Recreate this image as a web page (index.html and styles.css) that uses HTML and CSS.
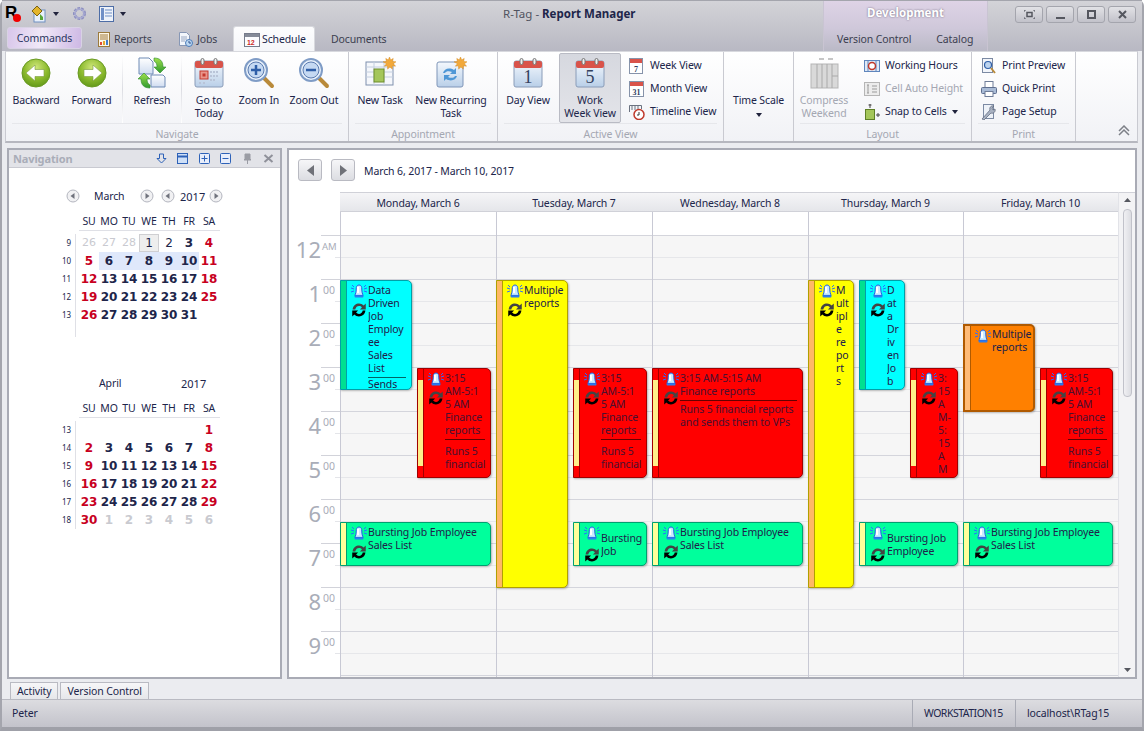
FILE: index.html
```html
<!DOCTYPE html>
<html lang="en">
<head>
<meta charset="utf-8">
<title>R-Tag - Report Manager</title>
<link rel="stylesheet" href="styles.css">
</head>
<body>
<svg class="defs" aria-hidden="true">
  <defs>
    <radialGradient id="gGreen" cx="50%" cy="30%" r="75%"><stop offset="0" stop-color="#cfe67a"/><stop offset=".55" stop-color="#8dbb2e"/><stop offset="1" stop-color="#5c9416"/></radialGradient>
    <linearGradient id="gBlue" x1="0" y1="0" x2="0" y2="1"><stop offset="0" stop-color="#f4f8fd"/><stop offset="1" stop-color="#b9cfe8"/></linearGradient>
    <linearGradient id="gPage" x1="0" y1="0" x2="0" y2="1"><stop offset="0" stop-color="#fff"/><stop offset="1" stop-color="#cfdcf0"/></linearGradient>
    <linearGradient id="gArrow" x1="0" y1="0" x2="0" y2="1"><stop offset="0" stop-color="#9fe04a"/><stop offset="1" stop-color="#2f9a2f"/></linearGradient>
    <symbol id="bell" viewBox="0 0 16 14">
      <path d="M0 4l3 1M1 1l2 2M0 8l3-1M16 4l-3 1M15 1l-2 2M16 8l-3-1" stroke="#2b6cff" stroke-width="1" fill="none"/>
      <path d="M8 1C5.800 1 5.200 3 5.200 5c0 3-.6 5-1.400 6.400h8.400C11.400 10 10.800 8 10.800 5 10.800 3 10.200 1 8 1z" fill="#c9ebff" stroke="#1c5fe0"/>
      <rect x="3.500" y="11.500" width="9" height="2" rx="1" fill="#2a7bf0"/>
      <path d="M7 3v6" stroke="#fff" stroke-width="2"/>
    </symbol>
    <symbol id="recur" viewBox="1 1 12 12">
      <path d="M1.500 6.500C2 3 4.500 1.500 7 1.500c1.600 0 3 .6 4 1.700L12.800 1.500V6.500H7.800l1.700-1.700C8.900 4 8 3.600 7 3.600c-1.500 0-2.800 1-3.200 2.900z" fill="#444"/>
      <path d="M12.500 7.500C12 11 9.500 12.500 7 12.500c-1.600 0-3-.6-4-1.700L1.200 12.500V7.500h5L4.500 9.200c.6.800 1.500 1.200 2.500 1.200 1.500 0 2.800-1 3.200-2.900z" fill="#000"/>
    </symbol>
    <symbol id="cal" viewBox="0 0 32 32">
      <rect x="2" y="4" width="28" height="26" rx="2" fill="url(#gBlue)" stroke="#8a9cb8"/>
      <rect x="2" y="4" width="28" height="7" rx="2" fill="#d9534a"/>
      <rect x="8" y="1.500" width="3" height="6" rx="1.500" fill="#eee" stroke="#777"/>
      <rect x="21" y="1.500" width="3" height="6" rx="1.500" fill="#eee" stroke="#777"/>
    </symbol>
    <symbol id="lens" viewBox="0 0 32 32">
      <path d="M20 20l9 9" stroke="#b98a3a" stroke-width="4" stroke-linecap="round"/>
      <circle cx="13" cy="13" r="11" fill="#e8f1fb" stroke="#7f9cc6" stroke-width="2"/>
      <circle cx="13" cy="13" r="8" fill="#c5d9f2" stroke="#5c7cb0"/>
    </symbol>
    <symbol id="star" viewBox="0 0 14 14">
      <path d="M7 0l1.300 3.200L11 1.500l-.6 3.300 3.600.4-2.800 2 2.300 2.700-3.400-.4L10 13 7.500 10.800 5 13l-.2-3.500-3.400.4 2.300-2.700L0 5.200l3.600-.4L3 1.500l2.700 1.700z" fill="#f2a93b" stroke="#d38a1e" stroke-width=".5"/>
    </symbol>
    <symbol id="circleL" viewBox="0 0 14 14"><circle cx="7" cy="7" r="6" fill="#f1f1f3" stroke="#b4b6bf"/><path d="M8.500 4v6L4.500 7z" fill="#70737d"/></symbol>
    <symbol id="circleR" viewBox="0 0 14 14"><circle cx="7" cy="7" r="6" fill="#f1f1f3" stroke="#b4b6bf"/><path d="M5.500 4v6L9.500 7z" fill="#70737d"/></symbol>
  </defs>
</svg>

<div class="app">
  <header class="chrome">
    <div class="chrome-left">
      <div class="titlebar">
        <div class="qat">
          <span class="logo">R<i class="logo-dot"></i></span>
          <svg class="q1" width="16" height="18" viewBox="0 0 16 18"><rect x="3" y="5" width="11" height="12" fill="#e8f0fb" stroke="#6f8fc0"/><path d="M1 6l5-5 5 5-5 5z" fill="#e3b52c" stroke="#7a6213"/><path d="M9 9l3 3v3H9z" fill="#58a838"/></svg>
          <span class="caret q-caret"></span>
          <svg class="q2" width="15" height="15" viewBox="0 0 15 15"><circle cx="7.500" cy="7.500" r="5" fill="none" stroke="#8d8fc0" stroke-width="3" stroke-dasharray="2.500 1"/><circle cx="7.500" cy="7.500" r="4.500" fill="none" stroke="#a9abd2" stroke-width="1.500"/></svg>
          <svg class="q3" width="15" height="16" viewBox="0 0 15 16"><rect x=".5" y=".5" width="14" height="15" fill="#eef2f9" stroke="#4d6da6"/><rect x="2" y="2" width="3" height="12" fill="#6f8fc6"/><path d="M6 4h7M6 7h7M6 10h7" stroke="#6f8fc6"/></svg>
          <span class="caret q-caret"></span>
        </div>
        <div class="title">R-Tag - <b>Report Manager</b></div>
      </div>
      <nav class="tabs">
        <span class="tab-commands">Commands</span>
        <span class="tab t-reports"><svg width="12" height="15" viewBox="0 0 12 15"><rect x=".5" y=".5" width="11" height="14" fill="#fdf6e6" stroke="#9b7a3d"/><path d="M2 3h8M2 5h8M2 7h8" stroke="#a07b3d"/><rect x="2" y="10" width="2" height="3" fill="#e04a3a"/><rect x="5" y="9" width="2" height="4" fill="#e0a72f"/><rect x="8" y="8" width="2" height="5" fill="#3f7fd0"/></svg>Reports</span>
        <span class="tab t-jobs"><svg width="14" height="15" viewBox="0 0 14 15"><path d="M.5.500h7l3 3v10h-10z" fill="#f3f6fb" stroke="#8797b5"/><path d="M2 5h6M2 7h6M2 9h4" stroke="#9aa8c2"/><circle cx="10" cy="11" r="3.500" fill="#bcd7f2" stroke="#4c7cb8"/><path d="M10 9v2h2" stroke="#33558f" fill="none"/></svg>Jobs</span>
        <span class="tab tab-on"><svg width="16" height="15" viewBox="0 0 16 15"><rect x=".5" y="1.500" width="15" height="13" fill="#fbfcff" stroke="#767c8c"/><rect x="1" y="2" width="14" height="3" fill="#858b99"/><text x="3" y="12.500" class="cal-num">12</text></svg>Schedule</span>
        <span class="tab t-docs">Documents</span>
      </nav>
    </div>
    <div class="context">
      <div class="context-name">Development</div>
      <div class="context-tabs"><span>Version Control</span><span>Catalog</span></div>
    </div>
    <div class="winbtns">
      <span class="winbtn"><svg width="11" height="9" viewBox="0 0 11 9"><path d="M0 2V0h2M9 0h2v2M11 7v2H9M2 9H0V7" fill="none" stroke="#55575f"/><rect x="3" y="2.500" width="5" height="4" fill="none" stroke="#55575f" stroke-width="1.500"/></svg></span>
      <span class="winbtn"><svg width="9" height="9" viewBox="0 0 9 9"><rect x="0" y="7" width="9" height="2" fill="#55575f"/></svg></span>
      <span class="winbtn"><svg width="9" height="9" viewBox="0 0 9 9"><rect x="1" y="1" width="7" height="7" fill="none" stroke="#55575f" stroke-width="2"/></svg></span>
      <span class="winbtn"><svg width="9" height="9" viewBox="0 0 9 9"><path d="M1 1l7 7M8 1L1 8" stroke="#55575f" stroke-width="2"/></svg></span>
    </div>
  </header>

  <section class="ribbon">
    <div class="group g-nav">
      <div class="gbody">
        <div class="rbtn w56"><svg class="ic32" viewBox="0 0 32 32"><circle cx="16" cy="16" r="14" fill="url(#gGreen)" stroke="#6a9a24"/><path d="M6 16l9-8v4.500h9v7h-9V24z" fill="#fff" stroke="#7a9c40" stroke-width=".6"/></svg><span>Backward</span></div>
        <div class="rbtn w55"><svg class="ic32" viewBox="0 0 32 32"><circle cx="16" cy="16" r="14" fill="url(#gGreen)" stroke="#6a9a24"/><path d="M26 16l-9-8v4.500H8v7h9V24z" fill="#fff" stroke="#7a9c40" stroke-width=".6"/></svg><span>Forward</span></div>
        <i class="vsep sep-a"></i>
        <div class="rbtn w58"><svg class="ic32" viewBox="0 0 32 32"><path d="M3 1h10l4 4v12H3z" fill="url(#gPage)" stroke="#6f8bb5"/><path d="M15 18h12l2 2v10H15z" fill="url(#gPage)" stroke="#6f8bb5"/><path d="M18 1c6 0 9 3 9 9h3l-6 6-6-6h3c0-3-1-5-3-6z" fill="url(#gArrow)" stroke="#2c8a2c" stroke-width=".6"/><path d="M14 31c-6 0-9-3-9-9H2l6-6 6 6h-3c0 3 1 5 3 6z" fill="url(#gArrow)" stroke="#2c8a2c" stroke-width=".6"/></svg><span>Refresh</span></div>
        <i class="vsep"></i>
        <div class="rbtn w54"><svg class="ic32" viewBox="0 0 32 32"><use href="#cal"/><g fill="#b9c4d8"><rect x="17" y="14" width="2" height="2"/><rect x="20" y="14" width="2" height="2"/><rect x="23" y="14" width="2" height="2"/><rect x="17" y="18" width="2" height="2"/><rect x="20" y="18" width="2" height="2"/><rect x="23" y="18" width="2" height="2"/><rect x="17" y="22" width="2" height="2"/><rect x="20" y="22" width="2" height="2"/><rect x="6" y="25" width="2" height="2"/><rect x="10" y="25" width="2" height="2"/></g><rect x="7" y="14" width="8" height="8" fill="#e9958b" stroke="#c4392f"/><rect x="9.500" y="16.500" width="3" height="3" fill="#c4392f"/></svg><span>Go to<br>Today</span></div>
        <div class="rbtn w46"><svg class="ic32" viewBox="0 0 32 32"><use href="#lens"/><path d="M8 13h10M13 8v10" stroke="#2f5fa8" stroke-width="2.500"/></svg><span>Zoom In</span></div>
        <div class="rbtn w64"><svg class="ic32" viewBox="0 0 32 32"><use href="#lens"/><path d="M8 13h10" stroke="#2f5fa8" stroke-width="2.500"/></svg><span>Zoom Out</span></div>
      </div>
      <div class="glabel">Navigate</div>
    </div>
    <div class="group g-app">
      <div class="gbody">
        <div class="rbtn w62"><svg class="ic32" viewBox="0 0 32 32"><rect x="2" y="5" width="27" height="23" fill="#f5f7fb" stroke="#7f90ad"/><path d="M2 10h27M2 15h27M2 20h27M10 5v23M20 5v23" stroke="#c3cedf"/><rect x="10" y="12" width="10" height="13" fill="#a4c65a" stroke="#6c8d2a"/><use href="#star" x="19" y="0" width="13" height="13"/></svg><span>New Task</span></div>
        <div class="rbtn w80"><svg class="ic32" viewBox="0 0 32 32"><rect x="2" y="5" width="26" height="25" rx="2" fill="url(#gBlue)" stroke="#7f95b8"/><path d="M8 16c1-4 6-6 11-3l2-2v6h-6l2-2c-3-1.500-6-1-7 1zM22 19c-1 4-6 6-11 3l-2 2v-6h6l-2 2c3 1.500 6 1 7-1z" fill="#4f97d6"/><use href="#star" x="19" y="0" width="13" height="13"/></svg><span>New Recurring<br>Task</span></div>
      </div>
      <div class="glabel">Appointment</div>
    </div>
    <div class="group g-view">
      <div class="gbody">
        <div class="rbtn w60"><svg class="ic32" viewBox="0 0 32 32"><use href="#cal"/><text x="16" y="26" class="cal-big">1</text></svg><span>Day View</span></div>
        <div class="rbtn w62 rbtn-on"><svg class="ic32" viewBox="0 0 32 32"><use href="#cal"/><text x="16" y="26" class="cal-big">5</text></svg><span>Work<br>Week View</span></div>
        <div class="rcol col-view">
          <div class="rsm"><svg width="16" height="16" viewBox="0 0 16 16"><rect x=".5" y=".5" width="13" height="15" fill="#fff" stroke="#8693aa"/><rect x="1" y="1" width="12" height="4" fill="#d9534a"/><text x="7" y="14" class="cal-sm">7</text></svg><span>Week View</span></div>
          <div class="rsm"><svg width="16" height="16" viewBox="0 0 16 16"><rect x=".5" y=".5" width="14" height="15" fill="#fff" stroke="#8693aa"/><rect x="1" y="1" width="13" height="4" fill="#d9534a"/><text x="7.500" y="14" class="cal-sm">31</text></svg><span>Month View</span></div>
          <div class="rsm"><svg width="16" height="16" viewBox="0 0 16 16"><path d="M.5 8V1.500h12V5M3 2v4M6 2v4M9 2v4" fill="none" stroke="#6b7280"/><circle cx="10" cy="10.500" r="5" fill="#fff" stroke="#c0392b" stroke-width="1.500"/><path d="M10 8v3H8" stroke="#333" fill="none"/></svg><span>Timeline View</span></div>
        </div>
      </div>
      <div class="glabel">Active View</div>
    </div>
    <div class="group g-scale">
      <div class="gbody gbody-center">
        <div class="rbtn-text"><span>Time Scale</span><span class="caret"></span></div>
      </div>
      <div class="glabel glabel-empty"></div>
    </div>
    <div class="group g-layout">
      <div class="gbody">
        <div class="rbtn w60 dim"><svg class="ic32" viewBox="0 0 32 32"><rect x="3" y="7" width="27" height="24" fill="#d9d9d9" stroke="#b5b5b5"/><path d="M9 7v24M14 7v24M19 7v24M24 7v24M24 19h6" stroke="#a9a9a9"/><path d="M11 2h5M25 2h-5" stroke="#8d8d8d"/></svg><span>Compress<br>Weekend</span></div>
        <div class="rcol col-layout">
          <div class="rsm"><svg width="16" height="16" viewBox="0 0 16 16"><rect x=".5" y="2.500" width="15" height="11" fill="#dfe9f6" stroke="#5f86bd"/><path d="M4 3v10M12 3v10" stroke="#5f86bd"/><circle cx="8" cy="8" r="3.500" fill="#fff" stroke="#c0392b" stroke-width="1.500"/></svg><span>Working Hours</span></div>
          <div class="rsm dim"><svg width="16" height="16" viewBox="0 0 16 16"><rect x=".5" y="1.500" width="15" height="13" fill="#ececec" stroke="#b5b5b5"/><path d="M4 4v8M3 4h2M3 12h2M8 5h5M8 8h5M8 11h5" stroke="#9a9a9a"/></svg><span>Cell Auto Height</span></div>
          <div class="rsm"><svg width="16" height="16" viewBox="0 0 16 16"><rect x="1.500" y="5.500" width="9" height="10" fill="#a4c65a" stroke="#5f7f27"/><path d="M6 0v4M4.500 1h3M12 11h4M14 9v4" stroke="#444"/></svg><span>Snap to Cells</span><span class="caret"></span></div>
        </div>
      </div>
      <div class="glabel">Layout</div>
    </div>
    <div class="group g-print">
      <div class="gbody">
        <div class="rcol col-print">
          <div class="rsm"><svg width="16" height="16" viewBox="0 0 16 16"><rect x="1.500" y=".5" width="10" height="14" fill="#f2f5fa" stroke="#7c8aa3"/><circle cx="7" cy="7" r="3.500" fill="#bcd3ee" stroke="#2f5fa8" stroke-width="1.200"/><path d="M10 10l4 5" stroke="#b98a3a" stroke-width="2"/></svg><span>Print Preview</span></div>
          <div class="rsm"><svg width="16" height="16" viewBox="0 0 16 16"><rect x="4" y=".5" width="8" height="6" fill="#fff" stroke="#6f7d98"/><rect x=".5" y="6.500" width="15" height="6" rx="1" fill="#a9bbd6" stroke="#5f6f8f"/><rect x="4" y="10.500" width="8" height="5" fill="#fff" stroke="#6f7d98"/></svg><span>Quick Print</span></div>
          <div class="rsm"><svg width="16" height="16" viewBox="0 0 16 16"><rect x="2.500" y=".5" width="10" height="14" fill="#eef2f8" stroke="#7c8aa3"/><path d="M1 15l8-9c-1-2 1-5 4-4l-2 2 1 2 2-1c1 3-2 5-4 4l-7 7z" fill="#a9b2c2" stroke="#596377" stroke-width=".7"/></svg><span>Page Setup</span></div>
        </div>
      </div>
      <div class="glabel">Print</div>
    </div>
    <div class="group-end"><svg width="12" height="11" viewBox="0 0 12 11"><path d="M1 6l5-5 5 5M1 10l5-5 5 5" fill="none" stroke="#7d8088" stroke-width="1.500"/></svg></div>
  </section>

  <main class="workspace">
    <aside class="nav-panel">
      <div class="nav-head">
        <span class="nav-title">Navigation</span>
        <div class="nav-tools">
          <svg width="11" height="11" viewBox="0 0 11 11"><path d="M3.500 1h4v4.500H10L5.500 10 1 5.500h2.500z" fill="none" stroke="#2e62b8"/></svg>
          <svg width="11" height="11" viewBox="0 0 11 11"><rect x=".5" y=".5" width="10" height="10" fill="#cfe0f7" stroke="#2e62b8"/><path d="M1 3.500h9" stroke="#2e62b8" stroke-width="2"/></svg>
          <svg width="11" height="11" viewBox="0 0 11 11"><rect x=".5" y=".5" width="10" height="10" rx="1" fill="#e8eefb" stroke="#2e62b8"/><path d="M2.500 5.500h6M5.500 2.500v6" stroke="#2e62b8"/></svg>
          <svg width="11" height="11" viewBox="0 0 11 11"><rect x=".5" y=".5" width="10" height="10" rx="1" fill="#e8eefb" stroke="#2e62b8"/><path d="M2.500 5.500h6" stroke="#2e62b8"/></svg>
          <svg width="11" height="11" viewBox="0 0 11 11"><path d="M3 1h5v5l1 1H2l1-1zM5.500 7v4" fill="#9a9ca4" stroke="#9a9ca4"/></svg>
          <svg width="11" height="11" viewBox="0 0 11 11"><path d="M1.500 2l8 7M9.500 2l-8 7" stroke="#8f919a" stroke-width="2"/></svg>
        </div>
      </div>
      <div class="month month-1">
        <div class="mhead">
          <svg class="arrow a1" width="14" height="14"><use href="#circleL"/></svg>
          <span class="mname">March</span>
          <svg class="arrow a2" width="14" height="14"><use href="#circleR"/></svg>
          <svg class="arrow a3" width="14" height="14"><use href="#circleL"/></svg>
          <span class="myear">2017</span>
          <svg class="arrow a4" width="14" height="14"><use href="#circleR"/></svg>
        </div>
        <div class="wdays"><span>SU</span><span>MO</span><span>TU</span><span>WE</span><span>TH</span><span>FR</span><span>SA</span></div>
        <div class="mbody">
          <div class="wnums"><span>9</span><span>10</span><span>11</span><span>12</span><span>13</span></div>
          <div class="days-grid">
            <span class="out">26</span><span class="out">27</span><span class="out">28</span><span class="plain today">1</span><span class="plain">2</span><span class="b">3</span><span class="r">4</span>
            <span class="r">5</span><span class="b sel">6</span><span class="b sel">7</span><span class="b sel">8</span><span class="b sel">9</span><span class="b sel">10</span><span class="r">11</span>
            <span class="r">12</span><span class="b">13</span><span class="b">14</span><span class="b">15</span><span class="b">16</span><span class="b">17</span><span class="r">18</span>
            <span class="r">19</span><span class="b">20</span><span class="b">21</span><span class="b">22</span><span class="b">23</span><span class="b">24</span><span class="r">25</span>
            <span class="r">26</span><span class="b">27</span><span class="b">28</span><span class="b">29</span><span class="b">30</span><span class="b">31</span>
          </div>
        </div>
      </div>
      <div class="month month-2">
        <div class="mhead">
          <span class="mname mname-2">April</span>
          <span class="myear">2017</span>
        </div>
        <div class="wdays"><span>SU</span><span>MO</span><span>TU</span><span>WE</span><span>TH</span><span>FR</span><span>SA</span></div>
        <div class="mbody">
          <div class="wnums"><span>13</span><span>14</span><span>15</span><span>16</span><span>17</span><span>18</span></div>
          <div class="days-grid">
            <span></span><span></span><span></span><span></span><span></span><span></span><span class="r">1</span>
            <span class="r">2</span><span class="b">3</span><span class="b">4</span><span class="b">5</span><span class="b">6</span><span class="b">7</span><span class="r">8</span>
            <span class="r">9</span><span class="b">10</span><span class="b">11</span><span class="b">12</span><span class="b">13</span><span class="b">14</span><span class="r">15</span>
            <span class="r">16</span><span class="b">17</span><span class="b">18</span><span class="b">19</span><span class="b">20</span><span class="b">21</span><span class="r">22</span>
            <span class="r">23</span><span class="b">24</span><span class="b">25</span><span class="b">26</span><span class="b">27</span><span class="b">28</span><span class="r">29</span>
            <span class="r">30</span><span class="outb">1</span><span class="outb">2</span><span class="outb">3</span><span class="outb">4</span><span class="outb">5</span><span class="outb">6</span>
          </div>
        </div>
      </div>
    </aside>

    <section class="sched">
      <div class="sched-nav">
        <span class="navbtn"><svg width="7" height="11" viewBox="0 0 7 11"><path d="M7 0v11L0 5.500z" fill="#6f7178"/></svg></span>
        <span class="navbtn"><svg width="7" height="11" viewBox="0 0 7 11"><path d="M0 0v11l7-5.500z" fill="#6f7178"/></svg></span>
        <span class="range">March 6, 2017 - March 10, 2017</span>
      </div>
      <div class="sched-body">
        <div class="rail">
          <div class="hr hr-12"><span class="hnum">12</span><span class="hmin">AM</span></div>
          <div class="hr"><span class="hnum">1</span><span class="hmin">00</span></div>
          <div class="hr"><span class="hnum">2</span><span class="hmin">00</span></div>
          <div class="hr"><span class="hnum">3</span><span class="hmin">00</span></div>
          <div class="hr"><span class="hnum">4</span><span class="hmin">00</span></div>
          <div class="hr"><span class="hnum">5</span><span class="hmin">00</span></div>
          <div class="hr"><span class="hnum">6</span><span class="hmin">00</span></div>
          <div class="hr"><span class="hnum">7</span><span class="hmin">00</span></div>
          <div class="hr"><span class="hnum">8</span><span class="hmin">00</span></div>
          <div class="hr"><span class="hnum">9</span><span class="hmin">00</span></div>
        </div>
        <div class="cols">
          <div class="col"><div class="dayhead">Monday, March 6</div><div class="allday"></div><div class="slots"></div></div>
          <div class="col"><div class="dayhead">Tuesday, March 7</div><div class="allday"></div><div class="slots"></div></div>
          <div class="col"><div class="dayhead">Wednesday, March 8</div><div class="allday"></div><div class="slots"></div></div>
          <div class="col col-n"><div class="dayhead">Thursday, March 9</div><div class="allday"></div><div class="slots"></div></div>
          <div class="col col-n"><div class="dayhead">Friday, March 10</div><div class="allday"></div><div class="slots"></div></div>

          <div class="appt cyan" style="left:0;top:88px;width:72px;height:110px"><span class="strip"></span><div class="ics"><svg class="bell"><use href="#bell"/></svg><svg class="rec"><use href="#recur"/></svg></div><div class="txt">Data<br>Driven<br>Job<br>Employ<br>ee<br>Sales<br>List<hr>Sends</div></div>

          <div class="appt red" style="left:77px;top:176px;width:74px;height:110px"><span class="strip"><i></i></span><div class="ics"><svg class="bell"><use href="#bell"/></svg><svg class="rec"><use href="#recur"/></svg></div><div class="txt">3:15<br>AM-5:1<br>5 AM<br>Finance<br>reports<hr class="gap">Runs 5<br>financial</div></div>

          <div class="appt green" style="left:0;top:330px;width:151px;height:44px"><span class="strip"></span><div class="ics"><svg class="bell"><use href="#bell"/></svg><svg class="rec"><use href="#recur"/></svg></div><div class="txt">Bursting Job Employee<br>Sales List</div></div>

          <div class="appt yellow" style="left:156px;top:88px;width:72px;height:308px"><span class="strip"></span><div class="ics"><svg class="bell"><use href="#bell"/></svg><svg class="rec"><use href="#recur"/></svg></div><div class="txt">Multiple<br>reports</div></div>

          <div class="appt red" style="left:233px;top:176px;width:74px;height:110px"><span class="strip"><i></i></span><div class="ics"><svg class="bell"><use href="#bell"/></svg><svg class="rec"><use href="#recur"/></svg></div><div class="txt">3:15<br>AM-5:1<br>5 AM<br>Finance<br>reports<hr class="gap">Runs 5<br>financial</div></div>

          <div class="appt green low" style="left:233px;top:330px;width:74px;height:44px"><span class="strip"></span><div class="ics"><svg class="bell"><use href="#bell"/></svg><svg class="rec"><use href="#recur"/></svg></div><div class="txt">Bursting<br>Job</div></div>

          <div class="appt red" style="left:312px;top:176px;width:151px;height:110px"><span class="strip"><i></i></span><div class="ics"><svg class="bell"><use href="#bell"/></svg><svg class="rec"><use href="#recur"/></svg></div><div class="txt">3:15 AM-5:15 AM<br>Finance reports<hr class="gap-s">Runs 5 financial reports<br>and sends them to VPs</div></div>

          <div class="appt green" style="left:312px;top:330px;width:151px;height:44px"><span class="strip"></span><div class="ics"><svg class="bell"><use href="#bell"/></svg><svg class="rec"><use href="#recur"/></svg></div><div class="txt">Bursting Job Employee<br>Sales List</div></div>

          <div class="appt yellow" style="left:468px;top:88px;width:46px;height:308px"><span class="strip"></span><div class="ics"><svg class="bell"><use href="#bell"/></svg><svg class="rec"><use href="#recur"/></svg></div><div class="txt">M<br>ult<br>ipl<br>e<br>re<br>po<br>rt<br>s</div></div>

          <div class="appt cyan" style="left:519px;top:88px;width:46px;height:110px"><span class="strip"></span><div class="ics"><svg class="bell"><use href="#bell"/></svg><svg class="rec"><use href="#recur"/></svg></div><div class="txt">D<br>at<br>a<br>Dr<br>iv<br>en<br>Jo<br>b</div></div>

          <div class="appt red" style="left:570px;top:176px;width:48px;height:110px"><span class="strip"><i></i></span><div class="ics"><svg class="bell"><use href="#bell"/></svg><svg class="rec"><use href="#recur"/></svg></div><div class="txt">3:<br>15<br>A<br>M-<br>5:<br>15<br>A<br>M</div></div>

          <div class="appt green low" style="left:519px;top:330px;width:99px;height:44px"><span class="strip"></span><div class="ics"><svg class="bell"><use href="#bell"/></svg><svg class="rec"><use href="#recur"/></svg></div><div class="txt">Bursting Job<br>Employee</div></div>

          <div class="appt orange" style="left:623px;top:132px;width:72px;height:88px"><span class="strip"></span><div class="ics"><svg class="bell"><use href="#bell"/></svg></div><div class="txt">Multiple<br>reports</div></div>

          <div class="appt red" style="left:700px;top:176px;width:73px;height:110px"><span class="strip"><i></i></span><div class="ics"><svg class="bell"><use href="#bell"/></svg><svg class="rec"><use href="#recur"/></svg></div><div class="txt">3:15<br>AM-5:1<br>5 AM<br>Finance<br>reports<hr class="gap">Runs 5<br>financial</div></div>

          <div class="appt green" style="left:623px;top:330px;width:150px;height:44px"><span class="strip"></span><div class="ics"><svg class="bell"><use href="#bell"/></svg><svg class="rec"><use href="#recur"/></svg></div><div class="txt">Bursting Job Employee<br>Sales List</div></div>
        </div>
        <div class="vscroll">
          <svg width="7" height="4" viewBox="0 0 7 4"><path d="M0 4l3.500-4L7 4z" fill="#55575f"/></svg>
          <span class="thumb"></span>
          <svg class="arrow-down" width="7" height="4" viewBox="0 0 7 4"><path d="M0 0l3.500 4L7 0z" fill="#55575f"/></svg>
        </div>
      </div>
    </section>
  </main>

  <div class="bottom-tabs"><span>Activity</span><span>Version Control</span></div>
  <footer class="status">
    <span class="st-user">Peter</span>
    <span class="st-cell st-ws">WORKSTATION15</span>
    <span class="st-cell st-db">localhost\RTag15</span>
  </footer>
</div>
</body>
</html>
```

FILE: styles.css
```css
* { box-sizing: border-box; }
html, body { margin: 0; padding: 0; }
body {
  width: 1144px; height: 731px; overflow: hidden;
  font-family: "Noto Sans", "Liberation Sans", sans-serif;
  font-size: 10.5px; line-height: 13px; color: #20254a; letter-spacing: -.12px;
  background: #fff;
}
.defs { position: absolute; width: 0; height: 0; }
.app {
  width: 1144px; height: 731px; display: flex; flex-direction: column;
  background: #ebecf0;
  border: 2px solid #a4a5ad; border-top: 0; border-bottom: 4px solid #9fa0a8;
  border-radius: 6px 6px 0 0;
}

/* Chrome */
.chrome {
  display: grid; grid-template-columns: 821px 165px 1fr; height: 51px; flex: none;
  background: linear-gradient(#d3d3d8, #c6c6cd 50%, #b8b8c3);
  border-top: 1px solid #a4a5ad;
}
.chrome-left { display: flex; flex-direction: column; }
.titlebar { height: 25px; display: flex; align-items: center; position: relative; }
.qat { display: flex; align-items: center; padding-left: 3px; }
.logo { font: bold 17px/18px "Liberation Sans", sans-serif; color: #000; width: 22px; height: 20px; position: relative; }
.logo-dot { position: absolute; left: 8px; top: 10px; width: 8px; height: 8px; border-radius: 50%; background: #f00000; }
.q1 { margin-left: 4px; }
.q-caret { margin-left: 6px; }
.q2 { margin-left: 13px; }
.q3 { margin-left: 12px; }
.caret { display: inline-block; width: 0; height: 0; border: 3.5px solid transparent; border-top: 4px solid #20233c; border-bottom: 0; }
.title { margin-left: 377px; font-size: 11.5px; color: #50535f; white-space: nowrap; letter-spacing: 0; }
.title b { color: #20254a; }
.tabs { height: 25px; display: flex; align-items: flex-end; padding-left: 5px; color: #3c4050; }
.tab-commands {
  width: 75px; height: 22px; margin-bottom: 2px; padding-top: 1px; display: flex; align-items: center; justify-content: center;
  border: 1px solid #d8d2e4; border-radius: 3px; color: #2a3560;
  background: linear-gradient(100deg, #d8c6ea, #f0e8f7 45%, #cdb8e4);
}
.tab { height: 24px; padding-top: 1px; display: flex; align-items: center; gap: 4px; }
.tab svg { flex: none; }
.t-reports { margin-left: 16px; width: 81px; }
.t-jobs { width: 54px; }
.tab-on { width: 82px; padding-left: 10px; height: 25px; gap: 2px; background: linear-gradient(#fdfdfe, #f5f6f9); color: #20254a; border-radius: 3px 3px 0 0; border: 1px solid #d8d9de; border-bottom: 0; }
.t-docs { margin-left: 16px; }
.cal-num { font: bold 7px "Liberation Sans", sans-serif; fill: #d02a1e; }
.context {
  display: flex; flex-direction: column; height: 50px;
  background: linear-gradient(#ded3e6, #cfc8da 55%, #bab9c6);
  border-left: 1px solid #c9c4d2; border-right: 1px solid #c9c4d2;
}
.context-name { height: 25px; text-align: center; line-height: 23px; font-weight: 700; font-size: 11.5px; letter-spacing: 0; color: #fff; text-shadow: 0 0 2px #6a5f78; }
.context-tabs { height: 25px; padding-top: 2px; display: flex; align-items: center; padding-left: 13px; gap: 25px; color: #3c4050; }
.winbtns { display: flex; gap: 3px; padding: 5px 0 0 27px; align-items: flex-start; }
.winbtn {
  width: 28px; height: 17px; display: flex; align-items: center; justify-content: center;
  border: 1px solid #a4a5ad; border-radius: 3px;
  background: linear-gradient(#e2e2e6, #c2c2ca);
}

/* Ribbon */
.ribbon {
  height: 92px; flex: none; display: flex; margin: 0 4px 0 3px;
  background: linear-gradient(#fff, #f1f2f6);
  border: 1px solid #c9cad1; border-top: 1px solid #d8d9de; border-bottom: 2px solid #b6b7bf;
}
.group { display: flex; flex-direction: column; border-right: 1px solid #c9cad1; flex: none; }
.g-nav { width: 343px; }
.g-app { width: 149px; }
.g-view { width: 226px; }
.g-scale { width: 70px; }
.g-layout { width: 178px; }
.g-print { width: 104px; }
.group-end { flex: 1; display: flex; align-items: flex-end; justify-content: flex-end; padding: 0 7px 5px 0; }
.gbody { height: 72px; display: flex; padding: 1px 0 0 2px; }
.g-app .gbody, .g-view .gbody, .g-layout .gbody, .g-print .gbody { padding-left: 0; }
.gbody-center { justify-content: center; padding: 1px 0 0; }
.glabel {
  flex: 1; margin: 0 6px; border-top: 1px solid #e6e7eb; text-align: center;
  color: #a4a7b2; line-height: 21px;
}
.glabel-empty { border-top: 0; }
.rbtn { display: flex; flex-direction: column; align-items: center; text-align: center; padding-top: 4px; height: 70px; flex: none; }
.rbtn > span { margin-top: 5px; white-space: nowrap; }
.ic32 { width: 32px; height: 32px; flex: none; }
.w46 { width: 46px; } .w54 { width: 54px; } .w55 { width: 55px; } .w56 { width: 56px; } .w58 { width: 58px; }
.w60 { width: 60px; } .w62 { width: 62px; } .w64 { width: 64px; } .w80 { width: 80px; }
.rbtn-on { background: linear-gradient(#d6d8df, #e3e4e9); border: 1px solid #b9bbc4; border-radius: 2px; padding-top: 3px; margin-left: 1px; }
.rbtn-text { display: flex; flex-direction: column; align-items: center; padding-top: 41px; gap: 6px; }
.vsep { width: 1px; height: 68px; margin-top: 2px; background: linear-gradient(#fff, #dcdde3 50%, #fff); flex: none; }
.sep-a { margin-left: 3px; }
.rcol { display: flex; flex-direction: column; padding-top: 1px; }
.col-view { margin-left: 8px; }
.col-layout { margin-left: 10px; }
.col-print { margin-left: 9px; }
.rsm { height: 23px; display: flex; align-items: center; gap: 5px; white-space: nowrap; }
.rsm svg { flex: none; }
.cal-big { font: 18px "Liberation Serif", serif; fill: #33415f; text-anchor: middle; }
.cal-sm { font: bold 8px "Liberation Serif", serif; fill: #33415f; text-anchor: middle; }
.dim { color: #a4a7b2; }

/* Workspace */
.workspace { flex: 1; min-height: 0; display: flex; gap: 5px; padding: 5px 5px 3px 5px; }
.nav-panel { width: 275px; background: #fff; border: 2px solid #a9abb5; display: flex; flex-direction: column; flex: none; }
.nav-head { height: 18px; flex: none; background: #e2e3e8; border-bottom: 1px solid #c9cad1; display: flex; align-items: center; justify-content: space-between; padding: 0 6px 0 4px; }
.nav-title { font-weight: 700; color: #a9adb8; font-size: 11px; }
.nav-tools { display: flex; gap: 10.4px; align-items: center; }
.month { position: relative; padding-left: 52px; }
.month-1 { height: 200px; padding-top: 19px; }
.month-2 { padding-top: 6px; }
.mhead { height: 18px; display: flex; align-items: center; position: relative; width: 170px; }
.arrow { flex: none; }
.a1 { margin-left: 5px; }
.mname { margin-left: 14px; width: 46px; }
.mname-2 { margin-left: 38px; width: 77px; }
.a3 { margin-left: 7px; }
.myear { margin: 0 4px 0 5px; font-size: 11px; letter-spacing: 0; }
.wdays {
  display: grid; grid-template-columns: repeat(7, 20px); width: 141px; margin-left: 18px; margin-top: 10px;
  height: 16px; text-align: center; border-bottom: 1px solid #dfe0e6;
}
.mbody { display: flex; margin-top: 3px; }
.wnums {
  width: 15px; display: flex; flex-direction: column;
  font-size: 8px; color: #20254a; align-items: flex-end;
  border-right: 1px solid #dfe0e6; padding-right: 4px; min-height: 103px;
}
.wnums span { height: 18px; line-height: 18px; }
.days-grid { display: grid; grid-template-columns: repeat(7, 20px); grid-auto-rows: 18px; margin-left: 3px; align-content: start; }
.days-grid span { text-align: center; line-height: 18px; font-size: 12px; font-family: "DejaVu Sans", sans-serif; letter-spacing: 0; }
.days-grid .out { color: #c9cad0; font-size: 11px; }
.outb { color: #c9cad0; font-weight: 700; }
.plain { color: #20254a; }
.b { color: #20254a; font-weight: 700; }
.r { color: #c8001e; font-weight: 700; }
.sel { background: #dfe8fb; }
.today { background: #eeeeee; box-shadow: inset 0 0 0 1px #cfcfd2; }

/* Scheduler */
.sched { flex: 1; min-width: 0; background: #fff; border: 2px solid #a9abb5; display: flex; flex-direction: column; }
.sched-nav { height: 42px; flex: none; display: flex; align-items: center; padding: 0 0 2px 9px; gap: 9px; }
.navbtn { width: 24px; height: 22px; display: flex; align-items: center; justify-content: center; border: 1px solid #b9bac2; border-radius: 3px; background: linear-gradient(#f6f6f8, #dcdde2); }
.range { padding-top: 2px; }
.sched-body { flex: 1; min-height: 0; display: flex; overflow: hidden; }
.rail { width: 51px; flex: none; padding-top: 43px; }
.hr {
  height: 44px; display: flex; color: #a9adb8;
  background:
    linear-gradient(#d2d3da, #d2d3da) right top / 19px 1px no-repeat,
    linear-gradient(#e4e5e9, #e4e5e9) right 22px / 5px 1px no-repeat;
}
.hnum { width: 32px; text-align: right; font-size: 22px; line-height: 28px; letter-spacing: 0; }
.hmin { font-size: 10.5px; line-height: 13px; margin-left: 2px; margin-top: 5px; }
.hr-12 .hmin { font-size: 9.5px; margin-left: 1px; }
.cols { position: relative; display: flex; width: 778px; flex: none; }
.col { width: 156px; flex: none; display: flex; flex-direction: column; border-left: 1px solid #c8c9d4; }
.col-n { width: 155px; }
.dayhead { height: 20px; flex: none; text-align: center; line-height: 20px; background: linear-gradient(#f5f5f7, #e5e6ea); border-top: 1px solid #d0d1d8; border-bottom: 1px solid #d0d1d8; margin-left: -1px; }
.allday { height: 23px; flex: none; background: #fff; }
.slots {
  flex: 1;
  background-color: #f6f6f6;
  background-image: linear-gradient(#d4d5dc 1px, transparent 1px), linear-gradient(#e6e7ea 1px, transparent 1px);
  background-size: 100% 44px, 100% 44px;
  background-position: 0 0, 0 22px;
}
.vscroll { width: 17px; flex: none; background: #f3f3f5; display: flex; flex-direction: column; align-items: center; padding-top: 5px; border-left: 1px solid #e2e3e8; border-top: 1px solid #d0d1d8; }
.thumb { width: 9px; height: 188px; margin-top: 7px; border: 1px solid #c1c2ca; border-radius: 4px; background: linear-gradient(90deg, #f0f0f3, #dcdde2); }
.arrow-down { margin-top: auto; margin-bottom: 5px; }

/* Appointments */
.appt {
  position: absolute; display: flex; overflow: hidden;
  border: 1px solid; border-radius: 0 5px 5px 0;
  box-shadow: 1px 1px 2px rgba(0, 0, 0, .25);
}
.strip { width: 6px; flex: none; border-right: 1px solid; display: block; position: relative; }
.strip i { position: absolute; left: 0; right: 0; top: 11px; bottom: 11px; background: #ffef8a; display: block; }
.ics { width: 21px; flex: none; display: flex; flex-direction: column; align-items: center; padding: 3px 0 0 3px; gap: 5px; }
.bell { width: 16px; height: 14px; flex: none; }
.rec { width: 14px; height: 14px; flex: none; }
.txt { flex: 1; min-width: 0; padding-top: 3px; white-space: nowrap; color: #20204a; overflow: hidden; }
.txt hr { border: 0; height: 1px; margin: 2px 5px 0 0; background: rgba(0, 0, 0, .6); }
.txt hr.gap { margin-bottom: 5px; }
.txt hr.gap-s { margin-bottom: 2px; }
.cyan { background: #00ffff; border-color: #00a0a8; }
.cyan .strip { background: #00e090; border-color: #00a0a8; }
.red { background: #ff0000; border-color: #a00000; }
.red .strip { background: #ff0000; border-color: #a00000; }
.red .txt { color: #4a1030; }
.green { background: #00ff9c; border-color: #00a070; }
.green .strip { background: #ffff9a; border-color: #00a070; }
.yellow { background: #ffff00; border-color: #b0a000; }
.yellow .strip { background: #ffb866; border-color: #b0a000; }
.orange { background: #ff8000; border: 2px solid #b05a00; }
.orange .strip { background: #ffbb77; border-color: #b05a00; }
.orange .txt { padding-top: 2px; }
.low .txt { padding-top: 9px; }
.low .ics { gap: 8px; }

/* Bottom */
.bottom-tabs { height: 17px; flex: none; display: flex; gap: 2px; padding-left: 8px; align-items: flex-end; }
.bottom-tabs span { height: 17px; padding: 2px 6px 0; background: linear-gradient(#f6f6f8, #e6e7ea); border: 1px solid #b9bac2; border-bottom: 0; color: #20254a; }
.status { height: 28px; flex: none; display: flex; align-items: center; background: linear-gradient(#dcdce0, #c3c3cb); border-top: 1px solid #b9bac2; }
.st-user { padding-left: 10px; flex: 1; }
.st-cell { height: 100%; display: flex; align-items: center; border-left: 1px solid #a9abb5; padding-left: 11px; }
.st-ws { width: 103px; letter-spacing: -.5px; }
.st-db { width: 127px; }
```
